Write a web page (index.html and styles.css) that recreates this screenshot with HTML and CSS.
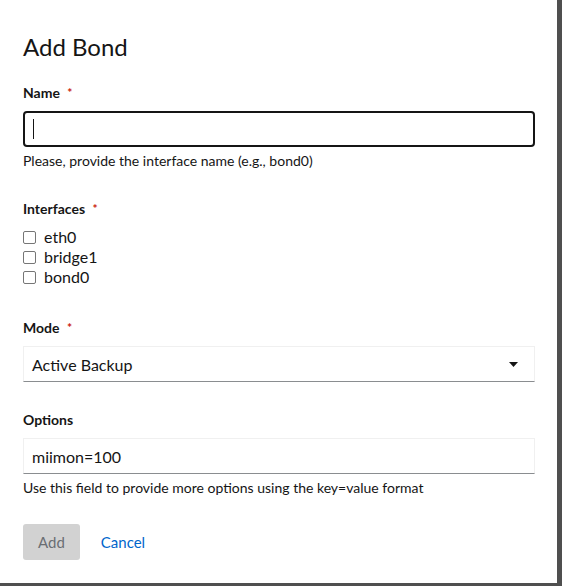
FILE: index.html
```html
<!DOCTYPE html>
<html>
<head>
<meta charset="utf-8">
<link rel="stylesheet" href="styles.css">
</head>
<body>
<div class="panel">
  <h1 class="title">Add Bond</h1>
  <form class="form">
    <div class="group">
      <label class="label">Name <span class="req">*</span></label>
      <div class="input focused"><span class="caret"></span></div>
      <div class="helper">Please, provide the interface name (e.g., bond0)</div>
    </div>
    <div class="group gap-lg">
      <label class="label">Interfaces <span class="req">*</span></label>
      <div class="checks">
        <label class="check"><span class="box"></span>eth0</label>
        <label class="check"><span class="box"></span>bridge1</label>
        <label class="check"><span class="box"></span>bond0</label>
      </div>
    </div>
    <div class="group gap-mode">
      <label class="label">Mode <span class="req">*</span></label>
      <div class="input select">
        <span>Active Backup</span>
        <svg class="arrow" width="9" height="5" viewBox="0 0 9 5"><path d="M0 0 H9 L4.5 5 Z" fill="#151515"/></svg>
      </div>
    </div>
    <div class="group gap-opt">
      <label class="label">Options</label>
      <div class="input plain">miimon=100</div>
      <div class="helper">Use this field to provide more options using the key=value format</div>
    </div>
    <div class="actions">
      <span class="btn-disabled">Add</span>
      <span class="link">Cancel</span>
    </div>
  </form>
</div>
</body>
</html>
```
FILE: styles.css
```css
html, body {
  margin: 0;
  padding: 0;
  background: #4f4f4f;
  width: 562px;
  height: 586px;
  overflow: hidden;
}
.panel {
  width: 557px;
  height: 583px;
  background: #fff;
  box-sizing: border-box;
  padding: 31px 23px 0 23px;
  font-family: Lato, "Liberation Sans", sans-serif;
  color: #151515;
}
.title {
  margin: 0;
  font-size: 24px;
  font-weight: 400;
  line-height: 32px;
}
.form {
  display: flex;
  flex-direction: column;
  margin-top: 20px;
  width: 512px;
}
.group {
  display: flex;
  flex-direction: column;
}
.gap-lg { margin-top: 28px; }
.gap-mode { margin-top: 31px; }
.gap-opt { margin-top: 28px; }
.label {
  font-size: 14px;
  font-weight: 700;
  line-height: 20px;
  margin-bottom: 8px;
}
.req {
  color: #c9190b;
  margin-left: 4px;
  font-size: 12px;
  vertical-align: top;
}
.input {
  height: 36px;
  box-sizing: border-box;
  border: 1px solid #f0f0f0;
  border-bottom-color: #8a8d90;
  display: flex;
  align-items: center;
  padding: 0 8px;
  font-size: 16px;
}
.input.focused {
  border: 2px solid #151515;
  border-radius: 4px;
  padding: 0 8px;
}
.caret {
  width: 1px;
  height: 20px;
  background: #151515;
}
.select {
  justify-content: space-between;
  padding-right: 16px;
}
.helper {
  font-size: 14px;
  line-height: 20px;
  margin-top: 4px;
}
.checks {
  display: flex;
  flex-direction: column;
}
.check {
  display: flex;
  align-items: center;
  font-size: 16px;
  line-height: 20px;
}
.box {
  width: 11px;
  height: 11px;
  border: 1px solid #767676;
  border-radius: 2px;
  margin-right: 8px;
  background: #fff;
}
.actions {
  display: flex;
  align-items: center;
  margin-top: 26px;
  gap: 21px;
}
.btn-disabled {
  background: #d2d2d2;
  color: #6a6e73;
  font-size: 15px;
  line-height: 20px;
  padding: 8px 15px;
  border-radius: 3px;
}
.link {
  color: #0066cc;
  font-size: 15px;
  padding: 8px 0;
}
```
